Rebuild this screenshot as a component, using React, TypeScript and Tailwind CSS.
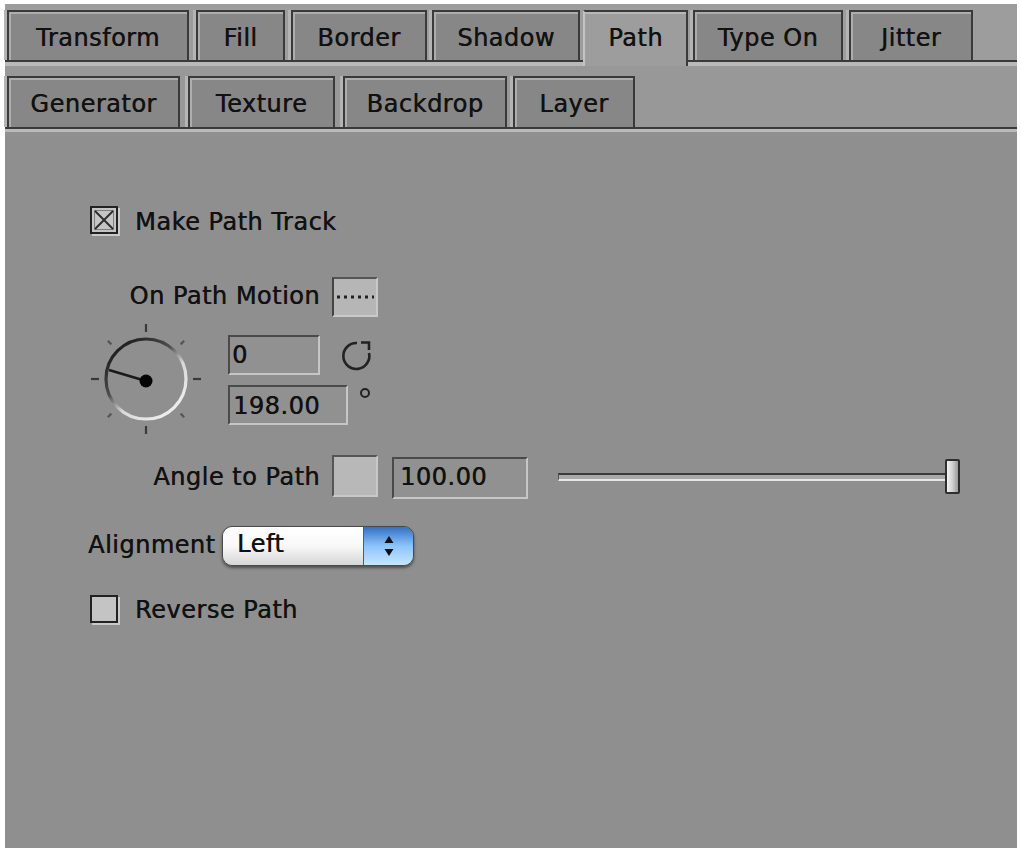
import React from "react";

const row1 = [
  { label: "Transform", cls: "ml-[2px] w-[182px]" },
  { label: "Fill", cls: "ml-[7px] w-[89px]" },
  { label: "Border", cls: "ml-[6px] w-[136px]" },
  { label: "Shadow", cls: "ml-[5px] w-[148px]" },
  { label: "Path", cls: "ml-[3px] w-[105px]", active: true },
  { label: "Type On", cls: "ml-[5px] w-[150px]" },
  { label: "Jitter", cls: "ml-[6px] w-[124px]" },
];

const row2 = [
  { label: "Generator", cls: "ml-[2px] w-[173px]" },
  { label: "Texture", cls: "ml-[8px] w-[147px]" },
  { label: "Backdrop", cls: "ml-[8px] w-[164px]" },
  { label: "Layer", cls: "ml-[6px] w-[122px]" },
];

function Tab({ label, cls, active }: { label: string; cls: string; active?: boolean }) {
  if (active) {
    return (
      <div
        className={`${cls} relative z-10 h-[56px] -mb-[6px] flex justify-center pt-[12px] leading-[28px] bg-[#9d9d9d] border-t-2 border-r-2 border-[#3a3a3a] border-l-2 border-l-[#c4c4c4] shadow-[inset_0_2px_0_#b8b8b8]`}
      >
        {label}
      </div>
    );
  }
  return (
    <div
      className={`${cls} h-full flex justify-center pt-[12px] leading-[28px] bg-[#878787] border-2 border-b-0 border-[#3a3a3a] shadow-[inset_2px_2px_0_#adadad,-3px_0_0_#b4b4b4]`}
    >
      {label}
    </div>
  );
}

function CheckBox({ checked }: { checked?: boolean }) {
  return (
    <div className="w-[28px] h-[28px] shrink-0 border-2 border-[#222] bg-[#c4c4c4] shadow-[2px_2px_0_#cacaca]">
      {checked && (
        <svg width="24" height="24" viewBox="0 0 24 24">
          <rect x="2.5" y="2.5" width="19" height="19" fill="none" stroke="#7e7e7e" strokeWidth="1" />
          <path d="M3 3 L21 21 M21 3 L3 21" stroke="#2a2a2a" strokeWidth="1.8" />
        </svg>
      )}
    </div>
  );
}

function Dial() {
  const cx = 66;
  const cy = 62;
  const ticks = [0, 45, 90, 135, 180, 225, 270, 315];
  return (
    <svg width="130" height="130" viewBox="0 0 130 130" className="shrink-0">
      <defs>
        <linearGradient id="ring" x1="0.1" y1="0" x2="0.9" y2="1">
          <stop offset="0" stopColor="#111" />
          <stop offset="0.4" stopColor="#4e4e4e" />
          <stop offset="0.6" stopColor="#d8d8d8" />
          <stop offset="1" stopColor="#f4f4f4" />
        </linearGradient>
      </defs>
      {ticks.map((a) => {
        const r = (a * Math.PI) / 180;
        const diag = a % 90 !== 0;
        const r1 = diag ? 49 : 47;
        const r2 = diag ? 54 : 55;
        return (
          <line
            key={a}
            x1={cx + Math.cos(r) * r1}
            y1={cy + Math.sin(r) * r1}
            x2={cx + Math.cos(r) * r2}
            y2={cy + Math.sin(r) * r2}
            stroke={diag ? "#555" : "#3a3a3a"}
            strokeWidth="2.2"
          />
        );
      })}
      <circle cx={cx} cy={cy} r="40" fill="#8f8f8f" stroke="url(#ring)" strokeWidth="3.2" />
      <line x1={cx} y1={cy + 2} x2="29" y2="53" stroke="#1a1a1a" strokeWidth="2.5" />
      <circle cx={cx} cy={cy + 2} r="6.5" fill="#050505" />
    </svg>
  );
}

function Field({ value, cls }: { value: string; cls: string }) {
  return (
    <div
      className={`${cls} border-2 border-t-[#4a4a4a] border-l-[#4a4a4a] border-b-[#c6c6c6] border-r-[#c6c6c6] bg-[#919191] leading-[28px]`}
    >
      {value}
    </div>
  );
}

export default function App() {
  return (
    <div className="w-[1021px] h-[853px] bg-white pt-[4px] pl-[5px] text-[24px] tracking-[0.5px] text-[#111] font-['DejaVu_Sans',sans-serif] [text-shadow:0.5px_0_0_#222]">
      <div className="w-[1012px] h-[844px] bg-[#8f8f8f] flex flex-col">
        {/* Tab row 1 */}
        <div className="flex items-end h-[58px] pt-[6px] bg-[#9d9d9d] border-b-2 border-[#3a3a3a]">
          {row1.map((t) => (
            <Tab key={t.label} {...t} />
          ))}
        </div>
        <div className="h-[4px] bg-[#b9b9b9]" />

        {/* Tab row 2 */}
        <div className="flex items-end h-[63px] pt-[10px] bg-[#989898] border-b-2 border-[#3a3a3a]">
          {row2.map((t) => (
            <Tab key={t.label} {...t} />
          ))}
        </div>
        <div className="h-[3px] bg-[#b9b9b9]" />

        {/* Panel content */}
        <div className="flex-1 flex flex-col">
          <div className="mt-[74px] ml-[85px] flex items-start">
            <CheckBox checked />
            <span className="ml-[17px] mt-[2px] leading-[28px]">Make Path Track</span>
          </div>

          <div className="mt-[41px] flex items-start">
            <div className="w-[315px] text-right mt-[5px] leading-[28px]">On Path Motion</div>
            <div className="ml-[12px] w-[46px] h-[40px] bg-[#b6b6b6] border-2 border-t-[#555] border-l-[#444] border-b-[#c8c8c8] border-r-[#c8c8c8] flex items-center">
              <svg width="42" height="6" viewBox="0 0 42 6">
                <line x1="3" y1="3" x2="40" y2="3" stroke="#222" strokeWidth="3" strokeDasharray="3 4" />
              </svg>
            </div>
          </div>

          <div className="flex items-start">
            <div className="ml-[75px]">
              <Dial />
            </div>
            <div className="ml-[18px] mt-[18px] flex flex-col">
              <div className="flex items-start">
                <Field value="0" cls="w-[92px] h-[40px] pl-[2px] pt-[4px]" />
                <svg width="36" height="34" viewBox="0 0 36 34" className="ml-[18px] mt-[4px]">
                  <path d="M19 4 A13 13 0 1 0 31 14" fill="none" stroke="#222" strokeWidth="2.6" />
                  <path d="M23 3.5 H31 V11" fill="none" stroke="#222" strokeWidth="2.6" />
                </svg>
              </div>
              <div className="flex items-start mt-[10px]">
                <Field value="198.00" cls="w-[120px] h-[40px] pl-[3px] pt-[5px]" />
                <svg width="14" height="14" viewBox="0 0 14 14" className="ml-[10px] mt-[1px]">
                  <circle cx="7" cy="7" r="4" fill="none" stroke="#222" strokeWidth="2" />
                </svg>
              </div>
            </div>
          </div>

          <div className="mt-[8px] flex items-start">
            <div className="w-[315px] text-right mt-[8px] leading-[28px]">Angle to Path</div>
            <div className="ml-[12px] w-[46px] h-[42px] bg-[#b8b8b8] border-2 border-t-[#555] border-l-[#555] border-b-[#c8c8c8] border-r-[#c8c8c8]" />
            <Field value="100.00" cls="ml-[14px] mt-[2px] w-[136px] h-[42px] pl-[6px] pt-[4px]" />
            <div className="ml-[30px] mt-[4px] h-[35px] flex items-center">
              <div className="w-[390px] h-[8px] border-t-2 border-[#3a3a3a] border-b-2 border-b-[#e6e6e6] border-l border-l-[#555] bg-[#a8a8a8]" />
              <div className="-ml-[3px] w-[15px] h-[35px] rounded-[2px] border-2 border-[#2e2e2e] bg-linear-to-r from-[#f4f4f4] via-[#d0d0d0] to-[#9a9a9a]" />
            </div>
          </div>

          <div className="mt-[27px] ml-[83px] flex items-start">
            <div className="w-[134px] mt-[5px] leading-[28px]">Alignment</div>
            <div className="w-[192px] h-[40px] rounded-[10px] border border-[#4a4a4a] shadow-[0_2px_3px_rgba(0,0,0,0.45)] flex overflow-hidden">
              <div className="flex-1 bg-linear-to-b from-white via-[#f8f8f8] to-[#d6d6d6] pl-[14px] pt-[3px] leading-[28px]">
                Left
              </div>
              <div className="w-[50px] border-l border-[#36609c] bg-linear-to-b from-[#3470c4] via-[#8cc4fa] to-[#c6e6ff] flex items-center justify-center">
                <svg width="12" height="26" viewBox="0 0 12 26">
                  <path d="M6 3 L10.5 10 H1.5 Z M6 23 L10.5 16 H1.5 Z" fill="#111" />
                </svg>
              </div>
            </div>
          </div>

          <div className="mt-[29px] ml-[85px] flex items-start">
            <CheckBox />
            <span className="ml-[17px] mt-[1px] leading-[28px]">Reverse Path</span>
          </div>
        </div>
      </div>
    </div>
  );
}
